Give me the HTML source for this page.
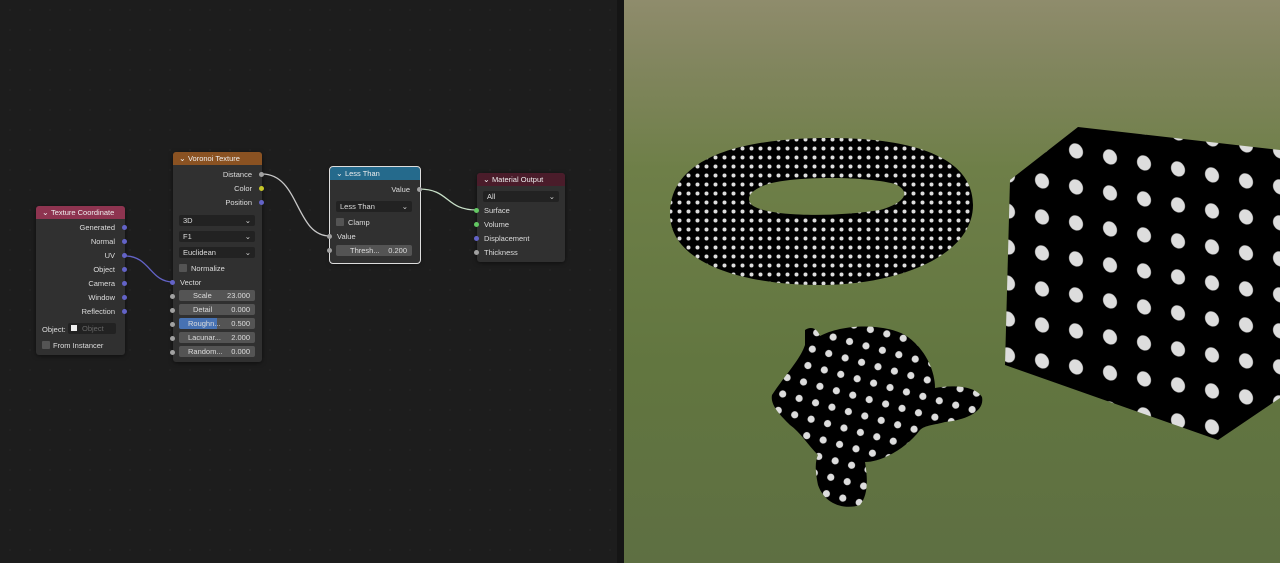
<!DOCTYPE html>
<html><head><meta charset="utf-8"><style>
*{margin:0;padding:0;box-sizing:border-box}
body{width:1280px;height:563px;overflow:hidden;background:#1d1d1d;font-family:"Liberation Sans",sans-serif;font-size:7.5px;color:#ddd;position:relative}
.ed{position:absolute;left:0;top:0;width:617px;height:563px;background-color:#1d1d1d;background-image:radial-gradient(#242424 0.8px,transparent 1px);background-size:20px 20px}
.div{position:absolute;left:617px;top:0;width:7px;height:563px;background:#151515}
.node{position:absolute;background:#303030;border-radius:3px;box-shadow:0 1px 4px rgba(0,0,0,.5)}
.hd{height:13px;border-radius:3px 3px 0 0;padding-left:6px;line-height:13px;color:#eee}
.hd:before{content:"⌄ ";font-size:8px}
.r{position:absolute;white-space:nowrap}
.rt{right:10px;text-align:right}
.s{position:absolute;width:5px;height:5px;border-radius:50%}
.f{position:absolute;background:#222;border-radius:2px;height:11px;line-height:11px;padding:0 4px;color:#ddd}
.fv{position:absolute;background:#545454;border-radius:2px;height:11px;line-height:11px;padding:0 5px;color:#ddd}
.cb{position:absolute;width:8px;height:8px;background:#545454;border-radius:1px}
</style></head><body>
<div class="ed"></div>
<svg style="position:absolute;left:0;top:0" width="617" height="563">
<path d="M125 256 C150 256,150 282,173 282" stroke="#6363c7" stroke-width="1.3" fill="none"/>
<path d="M262 174 C300 174,295 236,330 236" stroke="#c8c8c8" stroke-width="1.3" fill="none"/>
<path d="M419 189 C450 189,445 210,477 210" stroke="#c8e0c8" stroke-width="1.3" fill="none"/>
</svg>

<div class="node" style="left:36px;top:206px;width:89px;height:149px">
<div class="hd" style="background:#8e3450">Texture Coordinate</div>
<div class="r rt" style="top:17px">Generated</div>
<div class="r rt" style="top:31px">Normal</div>
<div class="r rt" style="top:45px">UV</div>
<div class="r rt" style="top:59px">Object</div>
<div class="r rt" style="top:73px">Camera</div>
<div class="r rt" style="top:87px">Window</div>
<div class="r rt" style="top:101px">Reflection</div>
<div class="r" style="left:6px;top:119px">Object:</div>
<div class="f" style="left:32px;top:117px;width:48px;color:#666;padding-left:14px">Object</div>
<div style="position:absolute;left:35px;top:119px;width:6px;height:6px;background:#eee"></div>
<div class="cb" style="left:6px;top:135px"></div><div class="r" style="left:17px;top:135px">From Instancer</div>
</div>
<div class="s" style="left:122px;top:225px;background:#6363c7"></div>
<div class="s" style="left:122px;top:239px;background:#6363c7"></div>
<div class="s" style="left:122px;top:253px;background:#6363c7"></div>
<div class="s" style="left:122px;top:267px;background:#6363c7"></div>
<div class="s" style="left:122px;top:281px;background:#6363c7"></div>
<div class="s" style="left:122px;top:295px;background:#6363c7"></div>
<div class="s" style="left:122px;top:309px;background:#6363c7"></div>

<div class="node" style="left:173px;top:152px;width:89px;height:210px">
<div class="hd" style="background:#8a5222">Voronoi Texture</div>
<div class="r rt" style="top:18px">Distance</div>
<div class="r rt" style="top:32px">Color</div>
<div class="r rt" style="top:46px">Position</div>
<div class="f" style="left:6px;top:63px;width:76px">3D<span style="float:right">⌄</span></div>
<div class="f" style="left:6px;top:79px;width:76px">F1<span style="float:right">⌄</span></div>
<div class="f" style="left:6px;top:95px;width:76px">Euclidean<span style="float:right">⌄</span></div>
<div class="cb" style="left:6px;top:112px"></div><div class="r" style="left:18px;top:112px">Normalize</div>
<div class="r" style="left:7px;top:126px">Vector</div>
<div class="fv" style="left:6px;top:138px;width:76px"><span style="padding-left:9px">Scale</span><span style="float:right">23.000</span></div>
<div class="fv" style="left:6px;top:152px;width:76px"><span style="padding-left:9px">Detail</span><span style="float:right">0.000</span></div>
<div class="fv" style="left:6px;top:166px;width:76px;background:linear-gradient(90deg,#4772b3 50%,#545454 50%)"><span style="padding-left:4px">Roughn...</span><span style="float:right">0.500</span></div>
<div class="fv" style="left:6px;top:180px;width:76px"><span style="padding-left:4px">Lacunar...</span><span style="float:right">2.000</span></div>
<div class="fv" style="left:6px;top:194px;width:76px"><span style="padding-left:4px">Random...</span><span style="float:right">0.000</span></div>
</div>
<div class="s" style="left:259px;top:172px;background:#a1a1a1"></div>
<div class="s" style="left:259px;top:186px;background:#c7c729"></div>
<div class="s" style="left:259px;top:200px;background:#6363c7"></div>
<div class="s" style="left:170px;top:280px;background:#6363c7"></div>
<div class="s" style="left:170px;top:294px;background:#a1a1a1"></div>
<div class="s" style="left:170px;top:308px;background:#a1a1a1"></div>
<div class="s" style="left:170px;top:322px;background:#a1a1a1"></div>
<div class="s" style="left:170px;top:336px;background:#a1a1a1"></div>
<div class="s" style="left:170px;top:350px;background:#a1a1a1"></div>

<div class="node" style="left:330px;top:167px;width:90px;height:96px;outline:1px solid #ddd">
<div class="hd" style="background:#256a8c">Less Than</div>
<div class="r rt" style="top:18px">Value</div>
<div class="f" style="left:6px;top:34px;width:76px">Less Than<span style="float:right">⌄</span></div>
<div class="cb" style="left:6px;top:51px"></div><div class="r" style="left:18px;top:51px">Clamp</div>
<div class="r" style="left:7px;top:65px">Value</div>
<div class="fv" style="left:6px;top:78px;width:76px"><span style="padding-left:9px">Thresh...</span><span style="float:right">0.200</span></div>
</div>
<div class="s" style="left:417px;top:187px;background:#a1a1a1"></div>
<div class="s" style="left:327px;top:234px;background:#a1a1a1"></div>
<div class="s" style="left:327px;top:248px;background:#a1a1a1"></div>

<div class="node" style="left:477px;top:173px;width:88px;height:89px">
<div class="hd" style="background:#4a1c2a">Material Output</div>
<div class="f" style="left:6px;top:18px;width:76px">All<span style="float:right">⌄</span></div>
<div class="r" style="left:7px;top:33px">Surface</div>
<div class="r" style="left:7px;top:47px">Volume</div>
<div class="r" style="left:7px;top:61px">Displacement</div>
<div class="r" style="left:7px;top:75px">Thickness</div>
</div>
<div class="s" style="left:474px;top:208px;background:#63c763"></div>
<div class="s" style="left:474px;top:222px;background:#63c763"></div>
<div class="s" style="left:474px;top:236px;background:#6363c7"></div>
<div class="s" style="left:474px;top:250px;background:#a1a1a1"></div>

<div class="div"></div>

<svg style="position:absolute;left:624px;top:0" width="656" height="563" viewBox="624 0 656 563">
<defs>
<linearGradient id="g" x1="0" y1="0" x2="0" y2="1">
<stop offset="0" stop-color="#8f8c6c"/><stop offset="0.1" stop-color="#838660"/>
<stop offset="0.3" stop-color="#6e7f48"/><stop offset="0.65" stop-color="#627640"/><stop offset="1" stop-color="#5e6f42"/>
</linearGradient>
<pattern id="pt" width="9" height="9" patternUnits="userSpaceOnUse"><rect width="9" height="9" fill="#000"/><circle cx="4.5" cy="4.5" r="2" fill="#ddd"/></pattern>
<pattern id="pm" width="17" height="17" patternUnits="userSpaceOnUse" patternTransform="rotate(15)"><rect width="17" height="17" fill="#000"/><circle cx="8" cy="8" r="3.6" fill="#ddd"/></pattern>
<pattern id="pc" width="34" height="36" patternUnits="userSpaceOnUse" patternTransform="translate(1025 160) skewY(10)"><rect width="34" height="36" fill="#000"/><ellipse cx="17" cy="18" rx="7" ry="7.5" fill="#ddd"/></pattern>
</defs>
<rect x="624" y="0" width="656" height="563" fill="url(#g)"/>
<path d="M670 214 C670 150,760 138,830 138 C920 138,973 160,973 205 C973 255,900 285,820 285 C740 285,670 262,670 214 Z M752 205 C765 216,830 218,880 210 C905 203,912 192,895 184 C865 176,795 176,768 184 C750 190,745 198,752 205 Z" fill="url(#pt)" fill-rule="evenodd"/>
<path d="M1010 180 L1078 127 L1280 150 L1280 398 L1218 440 L1005 365 Z" fill="url(#pc)"/>
<path d="M772 395 C785 375,800 360,805 345 L805 330 C812 325,818 330,820 336 C840 325,880 322,905 335 C925 348,935 370,935 388 C950 385,975 385,982 397 C985 412,965 420,945 422 C935 425,925 425,920 430 C905 450,880 462,865 462 C868 480,868 495,860 505 C845 510,825 505,818 485 C815 470,815 462,818 455 C808 445,800 432,790 425 C780 415,770 405,772 395 Z" fill="url(#pm)"/>
</svg>
</body></html>
